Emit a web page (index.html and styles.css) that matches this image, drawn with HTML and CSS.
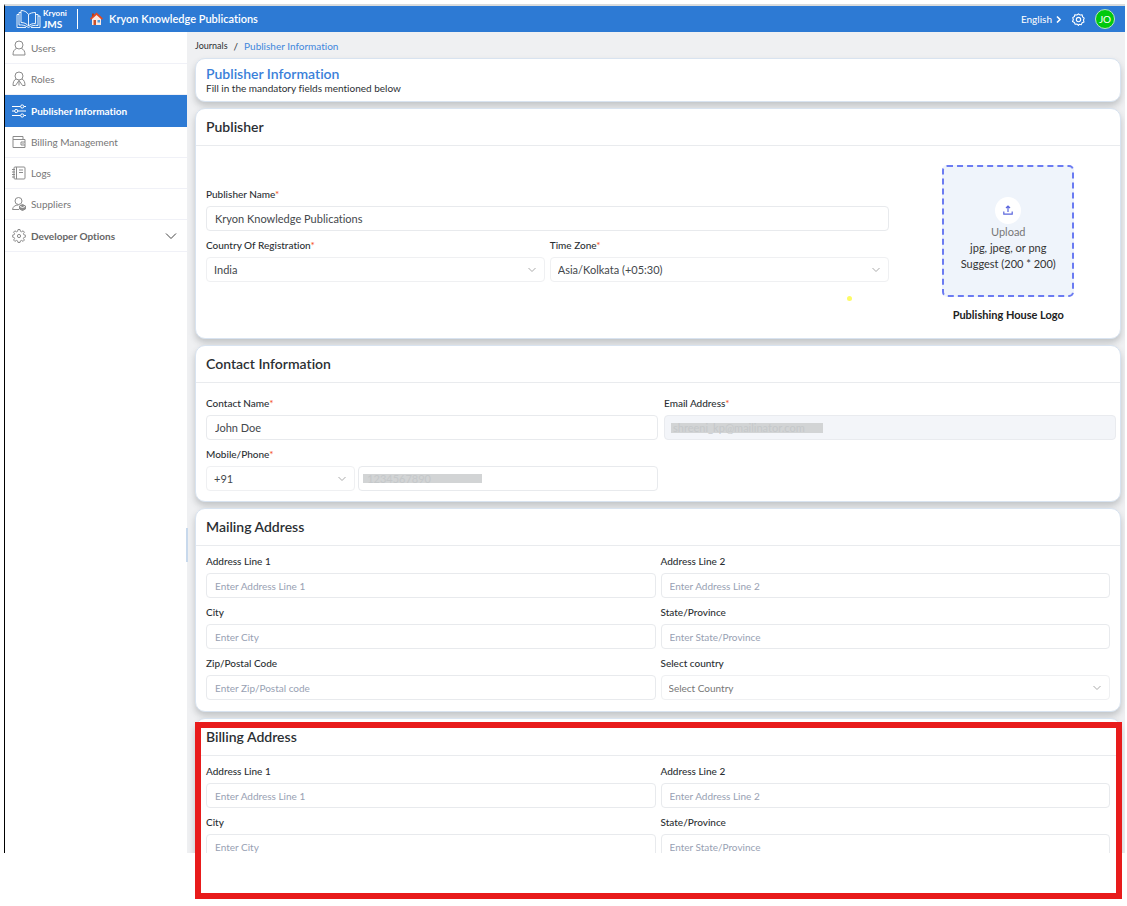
FILE: index.html
```html
<!DOCTYPE html>
<html lang="en">
<head>
    <meta charset="utf-8">
    <title>Publisher Information</title>
    <link rel="stylesheet" href="styles.css">
</head>
<body>
    <div class="app">
        <header class="topbar">
            <a class="brand" href="#">
                <svg width="25" height="20" viewBox="0 0 25 20" fill="none" stroke="#fff" stroke-width=".9">
                    <path d="M12.500 5.500C10.500 2.500 8 1.500 5 1.500v12c3 0 5.500 1 7.500 3.500 2-2 4-2.500 7-2.500v-11c-3 0-5 .5-7 2zM12.500 5.500V17"/>
                    <path d="M5 3.500H3V16c3.500-.5 6 .5 9.500 2.500 3-2 6-2.500 9.500-2V5.500h-2.500M3 5.500H1V18.500h9M22 7h2v11.500h-9"/>
                </svg>
                <span class="brand-text"><small>Kryoni</small><b>JMS</b></span>
            </a>
            <a class="publisher-link" href="#">
                <svg width="13" height="14" viewBox="0 0 13 14">
                    <path d="M2 6v7h9V6L6.500 2z" fill="#fbe9e2"/>
                    <path d="M2 1.500h2V5H2z" fill="#b33c1c"/>
                    <path d="M6.500.5L0 6.500l1.200 1.200L6.500 3l5.300 4.700L13 6.500z" fill="#e2491f"/>
                    <path d="M3.500 8h2.500v5H3.500z" fill="#c9502d"/>
                    <path d="M7.500 8h2.500v2.500H7.500z" fill="#4d9de0"/>
                </svg>
                Kryon Knowledge Publications
            </a>
            <div class="topbar-actions">
                <button class="lang" type="button">English
                    <svg width="6" height="8" viewBox="0 0 6 8" fill="none" stroke="#fff" stroke-width="1.600"><path d="M1 1.500l3 3-3 3"/></svg>
                </button>
                <button class="gear" type="button" aria-label="Settings">
                    <svg width="13" height="13" viewBox="0 0 24 24" fill="none" stroke="#fff" stroke-width="2">
                        <path d="M12 1.500l3 2.300 3.800-.4.700 3.700 3 2.400-1.300 3.500 1 3.700-3.500 1.500-1.700 3.400-3.800-.7L12 23l-2.700-2.600-3.500.5-1.500-3.400L1 15.800 2.500 12 1.300 8.500l3.200-1.900.7-3.500 3.900.6z" stroke-linejoin="round"/>
                        <circle cx="12" cy="12" r="4"/>
                    </svg>
                </button>
                <button class="avatar" type="button">JO</button>
            </div>
        </header>

        <div class="layout">
            <nav class="sidebar">
                <a href="#">
                    <svg width="14" height="16" viewBox="0 0 14 16"><circle cx="7" cy="5" r="4"/><path d="M4.500 8.500C2 9.500 1 11.500 1 15h12c0-3.500-1-5.500-3.500-6.500"/></svg>
                    Users
                </a>
                <a href="#">
                    <svg width="14" height="16" viewBox="0 0 14 16"><circle cx="7" cy="5" r="4"/><path d="M4 8c-2 1-3 3-3 6.500h2.500L7 9.500l3.500 5H13C13 11 12 9 10 8M7 9.500v5"/></svg>
                    Roles
                </a>
                <a class="active" href="#">
                    <svg width="14" height="16" viewBox="0 0 14 16"><path d="M0 3.500h8.500M12 3.500h2M0 8h2.500M6 8h8M0 12.500h8.500M12 12.500h2"/><circle cx="10.200" cy="3.500" r="1.600"/><circle cx="4.200" cy="8" r="1.600"/><circle cx="10.200" cy="12.500" r="1.600"/></svg>
                    Publisher Information
                </a>
                <a href="#">
                    <svg width="14" height="16" viewBox="0 0 14 16"><path d="M1 5.500V13.500h12V5.500zM1 5.500V2.500h10v3M13 8H9v3h4M10.500 9.500h1"/></svg>
                    Billing Management
                </a>
                <a href="#">
                    <svg width="14" height="16" viewBox="0 0 14 16"><rect x="2" y="2" width="11" height="12" rx="1"/><path d="M4.500 2v12M7 5h4M7 7.500h4M0 4.500h3M0 7h3M0 9.500h3M0 12h3"/></svg>
                    Logs
                </a>
                <a href="#">
                    <svg width="14" height="16" viewBox="0 0 14 16"><circle cx="6.500" cy="5" r="3.500"/><path d="M.5 13.500C1 10.500 3 9 6.500 9M.5 13.500H7"/><path d="M10.500 8.500l3 1.500v3l-3 1.500-3-1.500v-3z" fill="#8b8b8b"/><path d="M8 10.500l2.500 1 2.500-1" stroke="#fff"/></svg>
                    Suppliers
                </a>
                <button class="group" type="button">
                    <svg width="14" height="16" viewBox="0 0 14 16"><path d="M6 1.500h2l.4 1.800 1.200.5 1.500-1 1.300 1.400-1 1.500.5 1.100 1.800.5v1.600l-1.800.5-.5 1.100 1 1.500-1.300 1.400-1.500-1-1.200.5L8 14.500H6l-.4-1.600-1.200-.5-1.500 1L1.600 12l1-1.500-.5-1.100L.3 8.900V7.300l1.800-.5.5-1.100-1-1.500 1.300-1.400 1.500 1 1.200-.5z"/><circle cx="7" cy="8" r="1.600"/></svg>
                    Developer Options
                    <svg class="caret" width="12" height="8" viewBox="0 0 12 8"><path d="M1 1.500l5 5 5-5"/></svg>
                </button>
                <span class="drag-handle"></span>
            </nav>

            <main class="content">
                <div class="breadcrumb"><a href="#">Journals</a><span>/</span><a class="current" href="#">Publisher Information</a></div>

                <section class="card intro">
                    <h1>Publisher Information</h1>
                    <p>Fill in the mandatory fields mentioned below</p>
                </section>

                <section class="card">
                    <h2>Publisher</h2>
                    <div class="publisher-body">
                        <div class="fields publisher-fields">
                            <div class="field wide">
                                <label for="publisher-name">Publisher Name<i>*</i></label>
                                <input id="publisher-name" type="text" value="Kryon Knowledge Publications">
                            </div>
                            <div class="field">
                                <label for="country">Country Of Registration<i>*</i></label>
                                <select id="country"><option>India</option></select>
                            </div>
                            <div class="field">
                                <label for="timezone">Time Zone<i>*</i></label>
                                <select id="timezone"><option>Asia/Kolkata (+05:30)</option></select>
                            </div>
                        </div>
                        <div class="logo-column">
                            <button class="upload" type="button">
                                <span class="upload-icon">
                                    <svg width="10" height="10" viewBox="0 0 10 10" fill="none" stroke="#5b66dd" stroke-width="1.200"><path d="M5 7V1M3 3l2-2 2 2M.8 6.500v2.700h8.400V6.500"/></svg>
                                </span>
                                <span class="upload-title">Upload</span>
                                <span>jpg, jpeg, or png</span>
                                <span>Suggest (200 * 200)</span>
                            </button>
                            <strong>Publishing House Logo</strong>
                        </div>
                        <span class="pointer-dot"></span>
                    </div>
                </section>

                <section class="card">
                    <h2>Contact Information</h2>
                    <div class="fields contact-fields">
                        <div class="field">
                            <label for="contact-name">Contact Name<i>*</i></label>
                            <input id="contact-name" type="text" value="John Doe">
                        </div>
                        <div class="field">
                            <label for="email">Email Address<i>*</i></label>
                            <input id="email" class="masked masked-email" type="text" value="shreeni_kp@mailinator.com" readonly>
                        </div>
                        <div class="field">
                            <label for="phone">Mobile/Phone<i>*</i></label>
                            <div class="phone">
                                <select aria-label="Country code"><option>+91</option></select>
                                <input id="phone" class="masked masked-phone" type="text" value="1234567890">
                            </div>
                        </div>
                    </div>
                </section>

                <section class="card">
                    <h2>Mailing Address</h2>
                    <div class="fields">
                        <div class="field">
                            <label for="mail-line1">Address Line 1</label>
                            <input id="mail-line1" type="text" placeholder="Enter Address Line 1">
                        </div>
                        <div class="field">
                            <label for="mail-line2">Address Line 2</label>
                            <input id="mail-line2" type="text" placeholder="Enter Address Line 2">
                        </div>
                        <div class="field">
                            <label for="mail-city">City</label>
                            <input id="mail-city" type="text" placeholder="Enter City">
                        </div>
                        <div class="field">
                            <label for="mail-state">State/Province</label>
                            <input id="mail-state" type="text" placeholder="Enter State/Province">
                        </div>
                        <div class="field">
                            <label for="mail-zip">Zip/Postal Code</label>
                            <input id="mail-zip" type="text" placeholder="Enter Zip/Postal code">
                        </div>
                        <div class="field">
                            <label for="mail-country">Select country</label>
                            <select id="mail-country" class="empty"><option>Select Country</option></select>
                        </div>
                    </div>
                </section>

                <section class="card">
                    <h2>Billing Address</h2>
                    <div class="fields">
                        <div class="field">
                            <label for="bill-line1">Address Line 1</label>
                            <input id="bill-line1" type="text" placeholder="Enter Address Line 1">
                        </div>
                        <div class="field">
                            <label for="bill-line2">Address Line 2</label>
                            <input id="bill-line2" type="text" placeholder="Enter Address Line 2">
                        </div>
                        <div class="field">
                            <label for="bill-city">City</label>
                            <input id="bill-city" type="text" placeholder="Enter City">
                        </div>
                        <div class="field">
                            <label for="bill-state">State/Province</label>
                            <input id="bill-state" type="text" placeholder="Enter State/Province">
                        </div>
                    </div>
                </section>
            </main>
        </div>
    </div>
    <div class="highlight"></div>
</body>
</html>
```

FILE: styles.css
```css
* {
    box-sizing: border-box;
}

body {
    position: relative;
    height: 100vh;
    margin: 0;
    padding: 4px 2px 53px 4px;
    overflow: hidden;
    background: #fff;
    color: #2b2f33;
    font-family: Lato, sans-serif;
    font-size: 10px;
    font-variant-ligatures: none;
    line-height: 12px;
}

a {
    color: inherit;
    text-decoration: none;
}

button {
    padding: 0;
    border: 0;
    background: none;
    color: inherit;
    font: inherit;
    cursor: pointer;
}

.app {
    display: flex;
    flex-direction: column;
    height: 100%;
    overflow: hidden;
    border-top: 2px solid #d9dcdd;
    border-left: 1px solid #000;
}

/* top bar */
.topbar {
    display: flex;
    flex: none;
    align-items: center;
    height: 26px;
    padding: 0 10px 0 11px;
    background: #2d7ad4;
    color: #fff;
}

.brand {
    display: flex;
    align-items: center;
    gap: 2px;
    height: 20px;
    padding-right: 10px;
    border-right: 1px solid #fff;
}

.brand-text {
    display: flex;
    flex-direction: column;
    width: 24px;
}

.brand-text small {
    font-size: 8px;
    font-weight: bold;
    line-height: 10px;
}

.brand-text b {
    font-size: 10px;
    line-height: 12px;
}

.publisher-link {
    display: flex;
    align-items: center;
    gap: 6px;
    padding-left: 12px;
    font-size: 11px;
    font-weight: 600;
}

.topbar-actions {
    display: flex;
    align-items: center;
    gap: 10px;
    margin-left: auto;
}

.topbar-actions button {
    display: flex;
    align-items: center;
    justify-content: center;
    gap: 4px;
}

.topbar-actions .avatar {
    width: 20px;
    height: 20px;
    border: 1px solid #b9e6c0;
    border-radius: 50%;
    background: #00c90d;
}

/* sidebar */
.layout {
    display: flex;
    flex: 1;
    min-height: 0;
}

.sidebar {
    position: relative;
    flex: none;
    width: 182px;
    background: #fff;
    color: #777;
}

.sidebar a,
.sidebar .group {
    display: flex;
    align-items: center;
    gap: 5px;
    width: 100%;
    height: 32px;
    padding: 0 10px 0 7px;
    border-bottom: 1px solid #f0f1f7;
}

.sidebar a:nth-child(even),
.sidebar a:nth-child(5) {
    height: 31px;
}

.sidebar svg {
    flex: none;
    fill: none;
    stroke: #8b8b8b;
}

.sidebar .active {
    border-color: #2d7ad4;
    background: #2d7ad4;
    color: #fff;
    font-weight: bold;
}

.sidebar .active svg {
    stroke: #fff;
}

.sidebar .group {
    color: #666;
    font-weight: bold;
}

.sidebar .caret {
    margin-left: auto;
    stroke: #444;
}

.drag-handle {
    position: absolute;
    top: 496px;
    right: -1px;
    width: 2px;
    height: 34px;
    background: #c8d9ec;
}

/* content */
.content {
    display: flex;
    flex: 1;
    flex-direction: column;
    gap: 6px;
    min-width: 0;
    padding: 8px 4px 0 8px;
    overflow: hidden;
    background: #eff0f2;
}

.breadcrumb {
    display: flex;
    gap: 6px;
    line-height: 12px;
}

.breadcrumb a:first-child {
    font-size: 9px;
}

.breadcrumb .current {
    color: #4187dc;
}

.card {
    flex: none;
    border: 1px solid #d8e3f0;
    border-radius: 10px;
    background: #fff;
    box-shadow: 0 4px 6px rgba(60, 66, 70, 0.25);
}

.intro {
    height: 44px;
    padding: 6px 10px;
}

.intro h1 {
    margin: 0;
    color: #3a80d9;
    font-size: 14px;
    font-weight: 600;
    line-height: 17px;
}

.intro p {
    margin: 0;
}

.card h2 {
    margin: 0;
    padding: 10px;
    border-bottom: 1px solid #e9ebee;
    font-size: 14px;
    font-weight: 600;
    line-height: 16px;
}

.fields {
    display: grid;
    grid-template-columns: 1fr 1fr;
    gap: 8px 5px;
    padding: 9px 10px 11px;
}

.contact-fields {
    padding: 14px 4px 10px 10px;
    column-gap: 6px;
}

.field {
    display: flex;
    flex-direction: column;
    gap: 6px;
    min-width: 0;
}

.wide {
    grid-column: 1 / -1;
}

label {
    font-weight: 500;
}

label i {
    color: #f4511e;
    font-style: normal;
}

input,
select {
    width: 100%;
    height: 25px;
    padding: 0 8px;
    border: 1px solid #e8eaed;
    border-radius: 4px;
    background: #fff;
    color: #44484c;
    font: 11px Lato, sans-serif;
    font-variant-ligatures: none;
}

input::placeholder {
    color: #98a1b3;
    font-size: 10px;
}

select {
    padding: 0 7px;
    border-color: #eff0f2;
    appearance: none;
    background: url("data:image/svg+xml,%3Csvg xmlns='http://www.w3.org/2000/svg' width='8' height='6' fill='none' stroke='%23aaa'%3E%3Cpath d='M.5 1L4 4.500 7.500 1'/%3E%3C/svg%3E") no-repeat right 8px center;
}

.empty {
    color: #777;
    font-size: 10px;
}

.publisher-body {
    position: relative;
    display: grid;
    grid-template-columns: 3fr 1fr;
    padding: 19px 4px 17px 10px;
}

.publisher-fields {
    align-content: start;
    padding: 23px 0 0;
}

.logo-column {
    display: flex;
    flex-direction: column;
    align-items: center;
    gap: 12px;
    padding-left: 12px;
    color: #222;
}

.logo-column strong {
    font-size: 11px;
}

.upload {
    display: flex;
    flex-direction: column;
    align-items: center;
    justify-content: center;
    width: 132px;
    height: 132px;
    padding-top: 6px;
    border: 2px dashed #6b7bf2;
    border-radius: 5px;
    background: #eff4fb;
    color: #333;
    font-size: 11px;
    line-height: 16px;
}

.upload-icon {
    display: flex;
    align-items: center;
    justify-content: center;
    width: 26px;
    height: 27px;
    border-radius: 50%;
    background: #fff;
}

.upload-title {
    color: #777;
}

.pointer-dot {
    position: absolute;
    top: 150px;
    right: 268px;
    width: 5px;
    height: 5px;
    border-radius: 50%;
    background: #fdfb66;
}

.phone {
    display: grid;
    grid-template-columns: 33% 1fr;
    gap: 3px;
}

/* hidden personal values */
.masked {
    background-image: linear-gradient(#d2d4d5, #d2d4d5);
    background-repeat: no-repeat;
    color: #c5c8ca;
}

.masked-email {
    border-color: #e9ebef;
    background-color: #f3f5f9;
    background-position: 6px center;
    background-size: 152px 10px;
}

.masked-phone {
    background-position: 4px center;
    background-size: 119px 9px;
}

.highlight {
    position: absolute;
    top: 722px;
    right: 5px;
    bottom: 7px;
    left: 195px;
    border: 6px solid #e81b1b;
    pointer-events: none;
}
```
